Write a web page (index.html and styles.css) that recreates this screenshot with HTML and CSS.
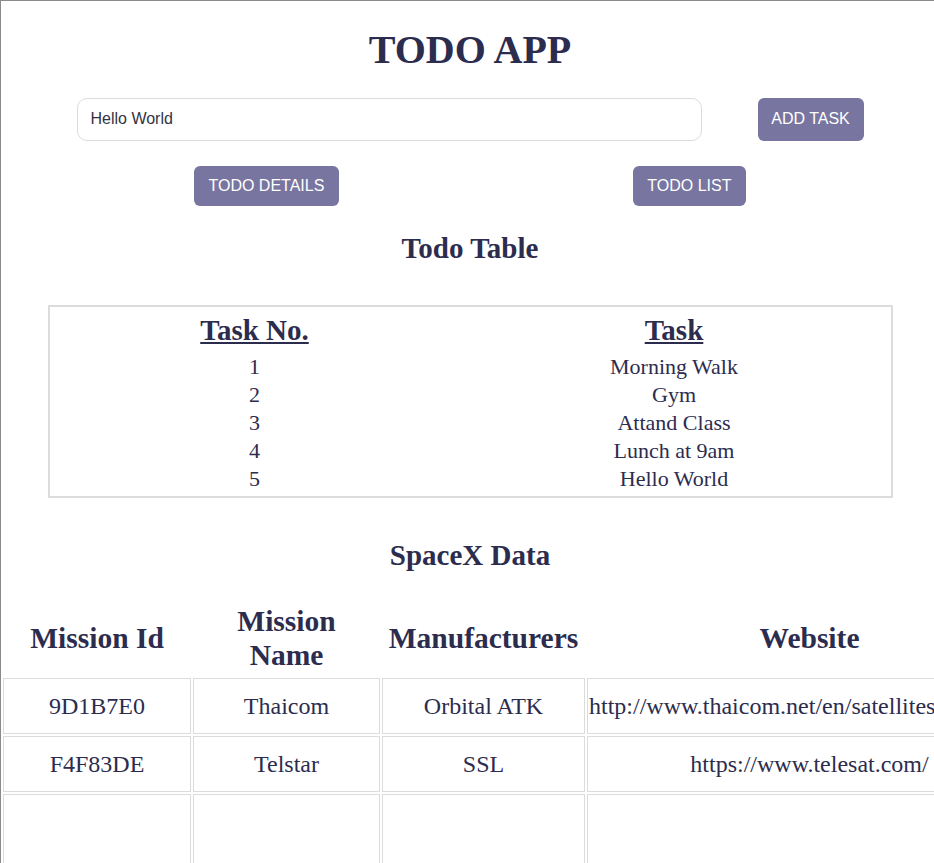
FILE: index.html
```html
<!DOCTYPE html>
<html lang="en">
<head>
<meta charset="utf-8">
<title>TODO APP</title>
<link rel="stylesheet" href="styles.css">
</head>
<body>
<div class="page">
  <h1 class="title">TODO APP</h1>
  <div class="add-row">
    <input class="task-input" type="text" value="Hello World">
    <button class="btn btn-add">ADD TASK</button>
  </div>
  <div class="nav-row">
    <button class="btn btn-nav">TODO DETAILS</button>
    <button class="btn btn-nav">TODO LIST</button>
  </div>
  <h2 class="section-title todo-heading">Todo Table</h2>
  <table class="todo-table">
    <thead>
      <tr><th class="col-no">Task No.</th><th>Task</th></tr>
    </thead>
    <tbody>
      <tr><td>1</td><td>Morning Walk</td></tr>
      <tr><td>2</td><td>Gym</td></tr>
      <tr><td>3</td><td>Attand Class</td></tr>
      <tr><td>4</td><td>Lunch at 9am</td></tr>
      <tr><td>5</td><td>Hello World</td></tr>
    </tbody>
  </table>
  <h2 class="section-title spacex-heading">SpaceX Data</h2>
  <table class="spacex-table">
    <colgroup>
      <col class="c1"><col class="c2"><col class="c3"><col class="c4">
    </colgroup>
    <thead>
      <tr><th>Mission Id</th><th class="th-wrap">Mission Name</th><th>Manufacturers</th><th>Website</th></tr>
    </thead>
    <tbody>
      <tr><td>9D1B7E0</td><td>Thaicom</td><td>Orbital ATK</td><td>http://www.thaicom.net/en/satellites/overview</td></tr>
      <tr><td>F4F83DE</td><td>Telstar</td><td>SSL</td><td>https://www.telesat.com/</td></tr>
      <tr class="empty-row"><td></td><td></td><td></td><td></td></tr>
    </tbody>
  </table>
</div>
</body>
</html>
```
FILE: styles.css
```css
html, body {
  margin: 0;
  padding: 0;
  overflow: hidden;
  background: #ffffff;
}
body {
  border-top: 1px solid #8a8a8a;
  border-left: 1px solid #8a8a8a;
  min-height: 900px;
  color: #2c2c4e;
  font-family: "Liberation Serif", "Times New Roman", serif;
}
.page {
  width: 938px;
}
.title {
  margin: 0;
  padding-top: 26px;
  font-size: 40px;
  line-height: 46px;
  font-weight: bold;
  text-align: center;
}
.add-row {
  display: flex;
  justify-content: center;
  gap: 56px;
  margin-top: 25px;
}
.task-input {
  box-sizing: border-box;
  width: 625px;
  height: 43px;
  padding: 0 13px 1px;
  border: 1px solid #dcdcdc;
  border-radius: 10px;
  font-family: "Liberation Sans", Arial, sans-serif;
  font-size: 16px;
  color: #333344;
  outline: none;
}
.btn {
  box-sizing: border-box;
  border: none;
  border-radius: 6px;
  background: #7875a0;
  color: #ffffff;
  font-family: "Liberation Sans", Arial, sans-serif;
  font-size: 16px;
  padding: 0 13px;
}
.btn-add {
  height: 43px;
  width: 106px;
  padding-bottom: 1px;
}
.nav-row {
  display: flex;
  justify-content: center;
  gap: 294px;
  margin-top: 25px;
}
.btn-nav {
  height: 40px;
  padding: 0 14.5px;
}
.section-title {
  margin: 0;
  text-align: center;
  font-size: 29px;
  line-height: 34px;
  font-weight: bold;
}
.todo-heading {
  margin-top: 25px;
}
.todo-table {
  width: 845px;
  margin: 40px auto 0;
  padding-bottom: 2px;
  border: 2px solid #dcdcdc;
  border-spacing: 2px;
}
.todo-table th {
  font-size: 29px;
  line-height: 34px;
  text-decoration: underline;
  padding: 4px 1px 5px;
}
.todo-table .col-no {
  width: 404px;
}
.todo-table td {
  font-size: 22px;
  line-height: 24px;
  padding: 1px;
  text-align: center;
}
.spacex-heading {
  margin-top: 40px;
}
.spacex-table {
  table-layout: fixed;
  width: 1033px;
  margin-top: 25px;
  border-spacing: 2px;
}
.spacex-table .c1 { width: 188px; }
.spacex-table .c2 { width: 187px; }
.spacex-table .c3 { width: 203px; }
.spacex-table .c4 { width: 445px; }
.spacex-table th {
  font-size: 29.5px;
  line-height: 34px;
  padding: 5px 1px 4px;
  font-weight: bold;
}
.spacex-table .th-wrap {
  padding-left: 12px;
  padding-right: 12px;
}
.spacex-table td {
  border: 1px solid #dcdcdc;
  font-size: 24px;
  line-height: 28px;
  padding: 13px 1px;
  text-align: center;
  white-space: nowrap;
}
.spacex-table .empty-row td {
  height: 90px;
}
```
